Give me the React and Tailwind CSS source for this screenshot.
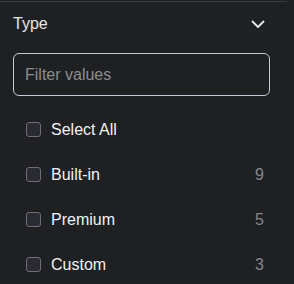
import React from "react";

const items = [
  { label: "Built-in", count: 9 },
  { label: "Premium", count: 5 },
  { label: "Custom", count: 3 },
];

function Box() {
  return <span className="w-[15px] h-[15px] rounded-[3px] border border-[#6e6e78] bg-[#2a2a33] shrink-0" />;
}

export default function App() {
  return (
    <div className="w-[294px] h-[284px] bg-[#1f2022] overflow-hidden" style={{ fontFamily: '"Liberation Sans", Arial, sans-serif' }}>
      <div className="pt-px w-[287px]">
        <div className="h-px bg-[#3a3b3e]" />
      </div>
      <div className="pl-[13px] pr-[24px]">
        <div className="h-[44px] flex items-center justify-between">
          <span className="text-[16px] text-[#e3e6eb] leading-none">Type</span>
          <svg width="14" height="9" viewBox="0 0 14 9" className="mr-[5px] mt-[1px]">
            <path d="M1.5 1.5 L7 7 L12.5 1.5" fill="none" stroke="#e6e9ee" strokeWidth="1.8" strokeLinecap="round" strokeLinejoin="round" />
          </svg>
        </div>
        <div className="mt-[7px] h-[43px] rounded-[6px] border border-[#c4ccda] flex items-center px-[11px]">
          <span className="text-[16px] text-[#8b8d92]">Filter values</span>
        </div>
        <div className="mt-[11px] pl-[13px] pr-[6px]">
          <div className="h-[45px] flex items-center gap-[10px]">
            <Box />
            <span className="text-[16px] text-[#f1f3f6]">Select All</span>
          </div>
          {items.map((it) => (
            <div key={it.label} className="h-[45px] flex items-center gap-[10px]">
              <Box />
              <span className="text-[16px] text-[#f1f3f6] flex-1">{it.label}</span>
              <span className="text-[16px] text-[#85878c]">{it.count}</span>
            </div>
          ))}
        </div>
      </div>
    </div>
  );
}
